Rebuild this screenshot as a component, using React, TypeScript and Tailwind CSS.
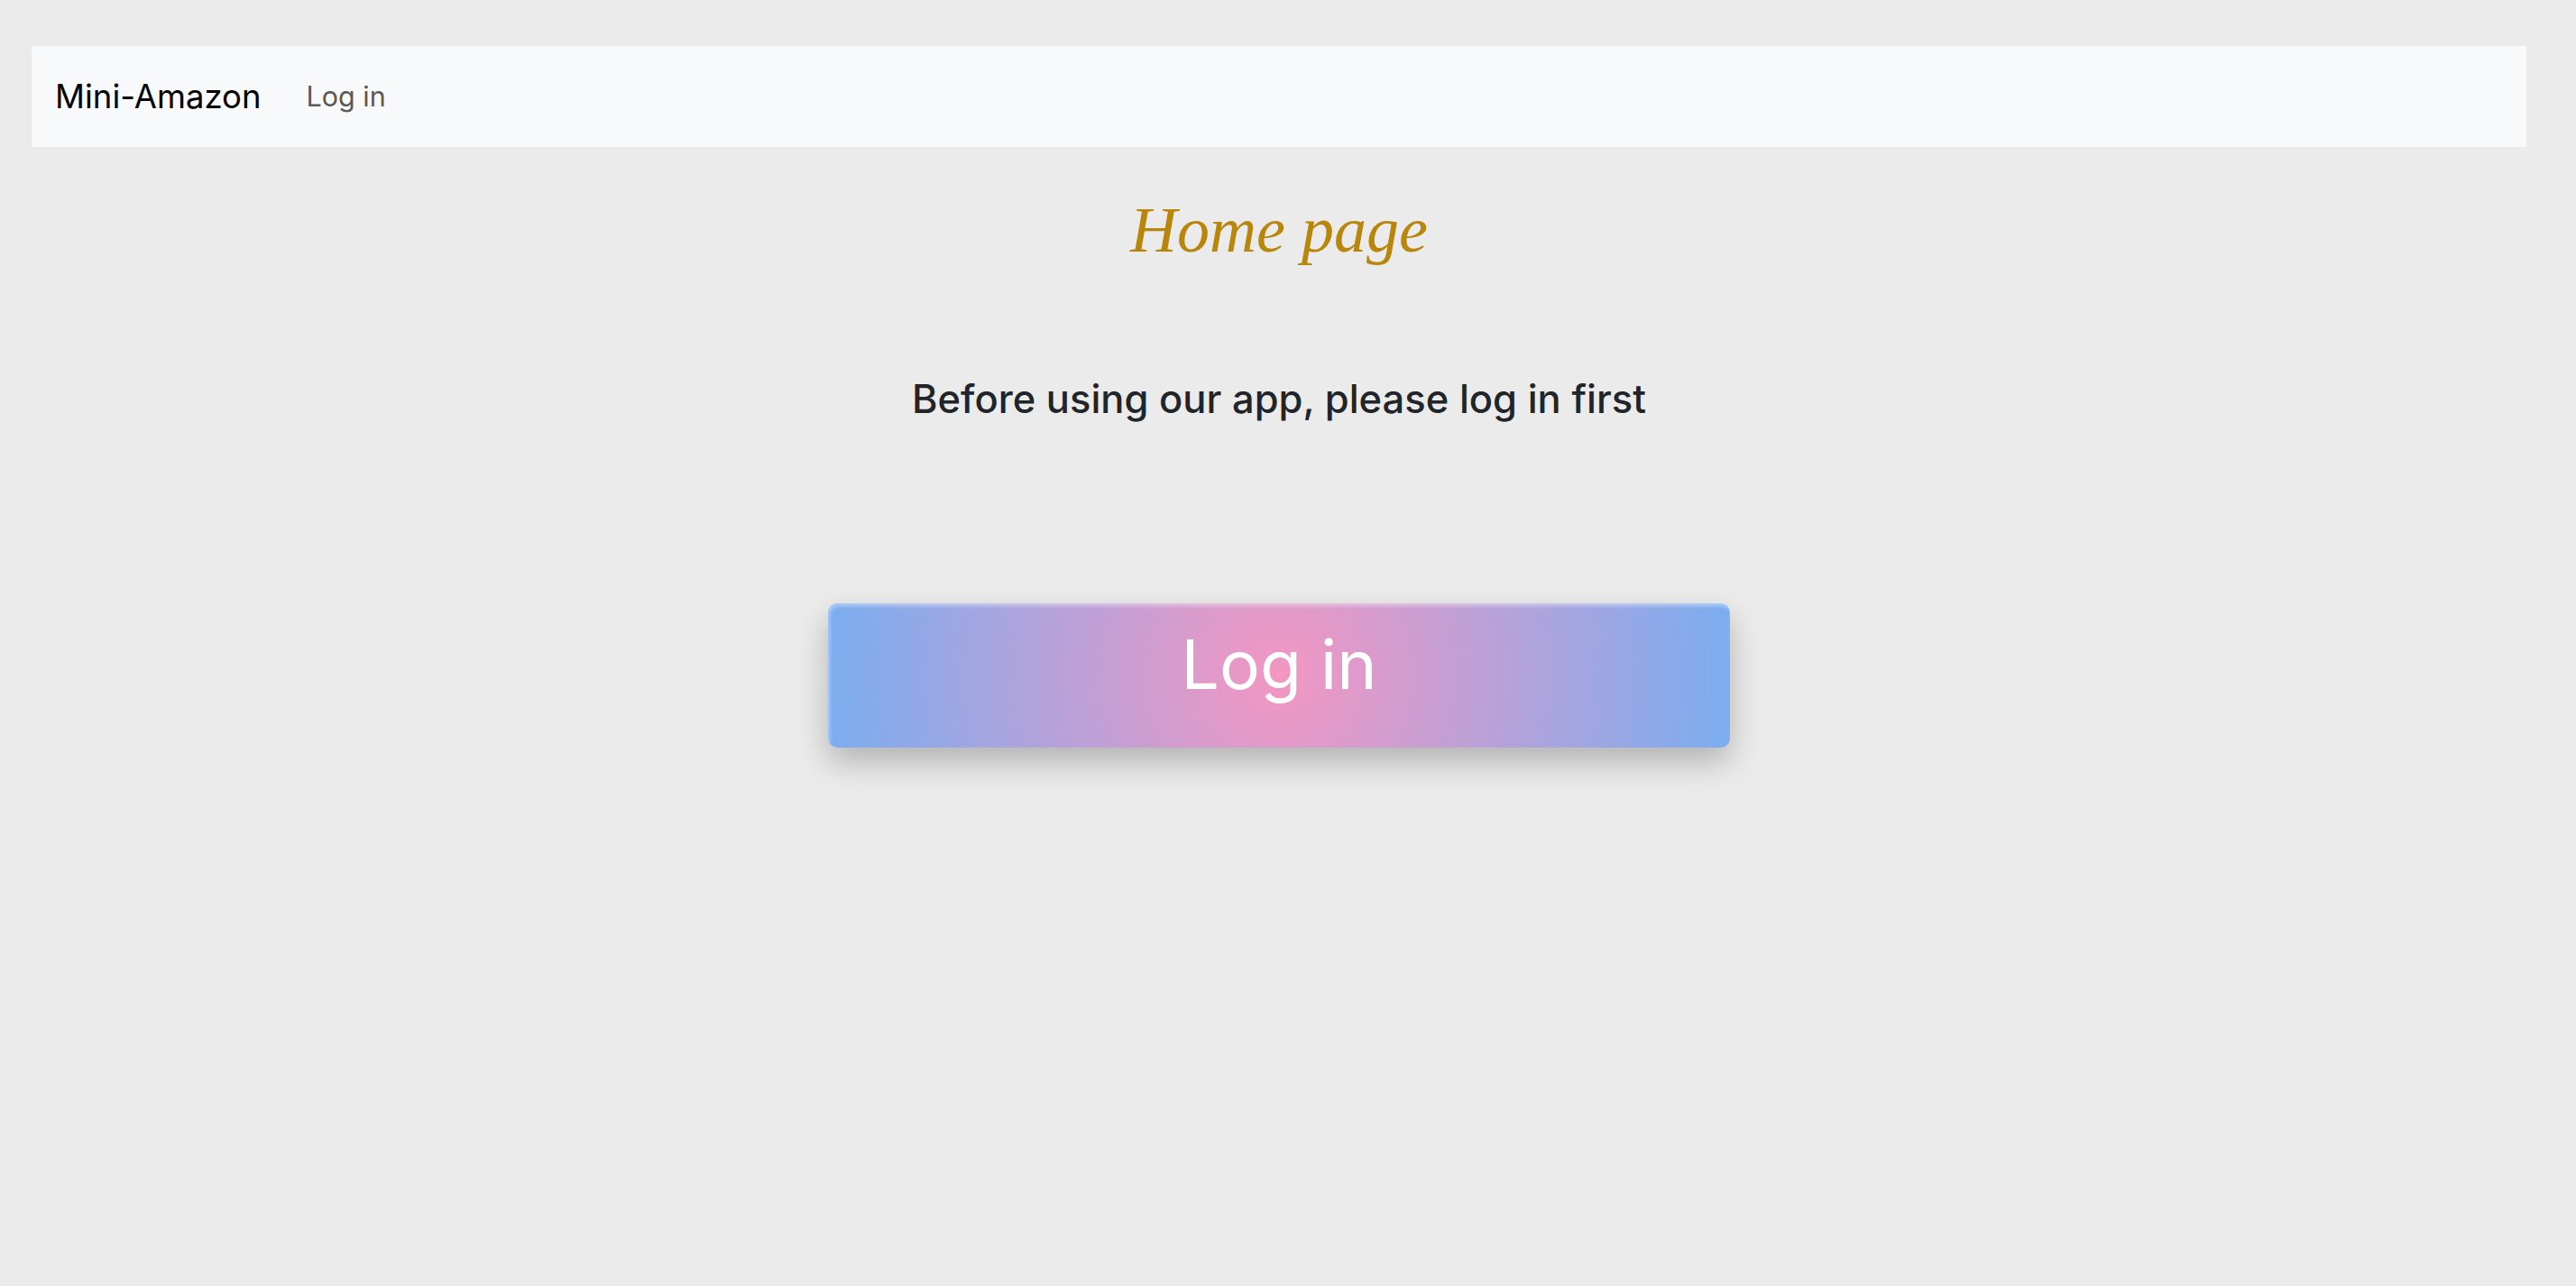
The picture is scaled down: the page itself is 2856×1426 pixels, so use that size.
export default function App() {
  return (
    <div className="min-h-screen bg-[#ebebeb] pt-[51px] font-['Inter',sans-serif]">
      <div className="ml-[35px] w-[2766px]">
        {/* Navbar */}
        <nav className="flex h-[112px] items-center bg-[#f8f9fa] px-[26px]">
          <span className="text-[36.5px] leading-none text-black">Mini-Amazon</span>
          <a href="#" className="ml-[50px] text-[30.5px] leading-none text-[#595a5b]">
            Log in
          </a>
        </nav>

        {/* Heading */}
        <h1 className="mt-[56px] text-center font-['Liberation_Serif',serif] text-[72px] italic leading-none text-[#b8860b]">
          Home page
        </h1>

        <p className="mt-[130px] text-center text-[43.5px] font-medium leading-none text-[#212529]">
          Before using our app, please log in first
        </p>

        {/* Main button */}
        <div className="mt-[204px] flex justify-center">
          <button className="flex h-[160px] w-[1000px] items-center justify-center rounded-[10px] bg-[radial-gradient(circle,#f396c2_0%,#7aadf0_100%)] pb-[24px] text-[75px] leading-none text-white shadow-[inset_2px_3px_4px_rgba(255,255,255,0.4),0_16px_34px_rgba(0,0,0,0.24)]">
            Log in
          </button>
        </div>
      </div>
    </div>
  );
}
